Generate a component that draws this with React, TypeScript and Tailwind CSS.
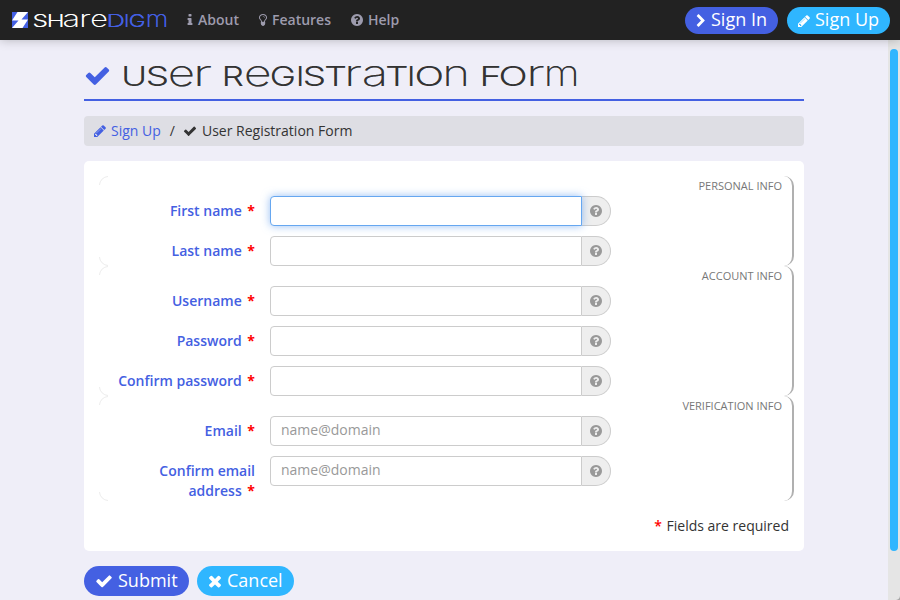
import React from "react";

const ICONS = {
  check:
    "M1671 566q0 40-28 68l-724 724-136 136q-28 28-68 28t-68-28l-136-136-362-362q-28-28-28-68t28-68l136-136q28-28 68-28t68 28l294 295 656-657q28-28 68-28t68 28l136 136q28 28 28 68z",
  times:
    "M1490 1322q0 40-28 68l-136 136q-28 28-68 28t-68-28l-294-294-294 294q-28 28-68 28t-68-28l-136-136q-28-28-28-68t28-68l294-294-294-294q-28-28-28-68t28-68l136-136q28-28 68-28t68 28l294 294 294-294q28-28 68-28t68 28l136 136q28 28 28 68t-28 68l-294 294 294 294q28 28 28 68z",
  question:
    "M1024 1376v-192q0-14-9-23t-23-9h-192q-14 0-23 9t-9 23v192q0 14 9 23t23 9h192q14 0 23-9t9-23zm256-672q0-88-55.5-163t-138.5-116-170-41q-243 0-371 213-15 24 8 42l132 100q7 6 19 6 16 0 25-12 53-68 86-92 34-24 86-24 48 0 85.5 26t37.5 59q0 38-20 61t-68 45q-63 28-115.5 86.5t-52.5 125.5v36q0 14 9 23t23 9h192q14 0 23-9t9-23q0-19 21.5-49.5t54.5-49.5q32-18 49-28.5t46-35 44.5-48 28-60.5 12.5-81zm384 192q0 209-103 385.5t-279.5 279.5-385.5 103-385.5-103-279.5-279.5-103-385.5 103-385.5 279.5-279.5 385.5-103 385.5 103 279.5 279.5 103 385.5z",
  pencil:
    "M491 1536l91-91-235-235-91 91v107h128v128h107zm523-928q0-22-22-22-10 0-17 7l-542 542q-7 7-7 17 0 22 22 22 10 0 17-7l542-542q7-7 7-17zm-54-192l416 416-832 832h-416v-416zm683 96q0 53-37 90l-166 166-416-416 166-165q36-38 90-38 53 0 91 38l235 234q37 39 37 91z",
  info: "M1216 1344v128q0 26-19 45t-45 19h-512q-26 0-45-19t-19-45v-128q0-26 19-45t45-19h64v-384h-64q-26 0-45-19t-19-45v-128q0-26 19-45t45-19h384q26 0 45 19t19 45v576h64q26 0 45 19t19 45zm-128-1152v192q0 26-19 45t-45 19h-256q-26 0-45-19t-19-45v-192q0-26 19-45t45-19h256q26 0 45 19t19 45z",
  bulb: "M1120 576q0 13-9.5 22.5t-22.5 9.5-22.5-9.5-9.5-22.5q0-46-54-71t-106-25q-13 0-22.5-9.5t-9.5-22.5 9.5-22.5 22.5-9.5q50 0 99.5 16t87 54 37.5 90zm160 0q0-72-34.5-134t-90-101.5-123-62-136.5-22.5-136.5 22.5-123 62-90 101.5-34.5 134q0 101 68 180 10 11 30.5 33t30.5 33q128 153 141 298h228q13-145 141-298 10-11 30.5-33t30.5-33q68-79 68-180zm128 0q0 155-103 268-45 49-74.5 87t-59.5 95.5-34 107.5q47 28 47 82 0 37-25 64 25 27 25 64 0 52-45 81 13 23 13 47 0 46-31.5 71t-77.5 25q-20 44-60 70t-87 26-87-26-60-70q-46 0-77.5-25t-31.5-71q0-24 13-47-45-29-45-81 0-37 25-64-25-27-25-64 0-54 47-82-4-50-34-107.5t-59.5-95.5-74.5-87q-103-113-103-268 0-99 44.5-184.5t117-142 164-89 186.5-32.5 186.5 32.5 164 89 117 142 44.5 184.5z",
  chevron:
    "M1363 877l-742 742q-19 19-45 19t-45-19l-166-166q-19-19-19-45t19-45l531-531-531-531q-19-19-19-45t19-45l166-166q19-19 45-19t45 19l742 742q19 19 19 45t-19 45z",
};

function Icon({ name, className }: { name: keyof typeof ICONS; className: string }) {
  return (
    <svg viewBox="0 0 1792 1792" fill="currentColor" className={"shrink-0 " + className} aria-hidden="true">
      <path d={ICONS[name]} />
    </svg>
  );
}

// Unicase lettering: small letters are drawn as tall as capitals, and every
// letter is widened to fill the ink span [left, right] given for it.
type Letter = [text: string, left: number, right: number];

const pen = document.createElement("canvas").getContext("2d")!;

function Unicase({
  letters,
  cap,
  weight,
  end,
}: {
  letters: Letter[];
  cap: number;
  weight: number;
  end: number;
}) {
  return (
    <span className="flex items-baseline whitespace-pre font-[Inter,sans-serif] leading-none">
      {letters.map(([text, left, right], i) => {
        const char = text.trim();
        const small = char === char.toLowerCase();
        const size = cap / (small ? 0.546 : 0.727);
        // The larger small letters need a lighter weight to keep one stroke width.
        const fontWeight = small ? weight - 100 : weight;
        pen.font = `${fontWeight} ${size * 10}px Inter`;
        const m = pen.measureText(char);
        const inkLeft = -m.actualBoundingBoxLeft / 10;
        const inkRight = m.actualBoundingBoxRight / 10;
        const scale = (right - left) / (inkRight - inkLeft);
        const next = i + 1 < letters.length ? letters[i + 1][1] : end;
        return (
          <span key={i} className="block" style={{ width: next - left }}>
            <span
              className="inline-block origin-left"
              style={{
                fontSize: size,
                fontWeight,
                transform: `translateX(${-inkLeft * scale}px) scaleX(${scale})`,
              }}
            >
              {char}
            </span>
            {text.slice(1)}
          </span>
        );
      })}
    </span>
  );
}

const TITLE: Letter[] = [
  ["U", 124, 144.3], ["S", 148, 167], ["e", 170, 193], ["r ", 197, 211.5],
  ["R", 225, 243], ["e", 245.5, 269], ["G", 271.5, 293.5], ["I", 298.7, 301.2], ["S", 305.5, 324.5],
  ["T", 326, 345.5], ["r", 348.5, 362], ["a", 364, 384], ["T", 387, 407], ["I", 410.3, 412.8],
  ["O", 417, 442], ["n ", 446.5, 466.5],
  ["F", 483, 499.5], ["O", 500.7, 525.3], ["r", 530, 544], ["m", 547, 576],
];

const BRAND: Letter[] = [
  ["S", 34, 46.5], ["H", 48.7, 62], ["a", 64.3, 77.5], ["r", 82, 90], ["e", 92, 106.3],
];

const BRAND_TAIL: Letter[] = [
  ["D", 109, 123.5], ["I", 126.2, 127.6], ["G", 130.3, 144.3], ["m", 148, 166],
];

function Field({
  label,
  placeholder,
  focused,
}: {
  label: string;
  placeholder?: string;
  focused?: boolean;
}) {
  return (
    <div className="flex items-start">
      <label className="w-[156px] pt-[5px] pl-3 text-right font-semibold text-[#4460e2]">
        {label} <span className="ml-0.5 font-bold text-[#f00]">*</span>
      </label>
      <div className="ml-[15px] flex h-[30px]">
        <input
          placeholder={placeholder}
          className={
            "relative h-[30px] w-[312px] rounded-l border bg-white px-[10px] pb-[3px] text-[14px] text-[#333] outline-none placeholder:text-[#999] " +
            (focused
              ? "z-10 border-[#66a7f0] shadow-[0_0_9px_rgba(82,148,236,0.6)]"
              : "border-[#ccc]")
          }
        />
        <span className="flex w-[29px] items-center justify-center rounded-r-full border border-l-0 border-[#ccc] bg-[#eee] text-[#999]">
          <Icon name="question" className="size-[14px]" />
        </span>
      </div>
    </div>
  );
}

function Group({ legend, children }: { legend: string; children: React.ReactNode }) {
  return (
    <section className="relative flex w-[695px] flex-col gap-2.5 rounded-[10px] border-r-2 border-[#b0b0b0] pt-5">
      {children}
      <h2 className="absolute top-0 right-[10px] text-[11px] leading-5 text-[#777] uppercase">{legend}</h2>
      <svg className="absolute top-0 left-0 size-[10px]" viewBox="0 0 10 10" fill="none" stroke="#ececec">
        <path d="M.5 9A9 9 0 0 1 9 .5" />
      </svg>
      <svg className="absolute bottom-0 left-0 size-[10px]" viewBox="0 0 10 10" fill="none" stroke="#ececec">
        <path d="M.5 1A9 9 0 0 0 9 9.5" />
      </svg>
    </section>
  );
}

export default function App() {
  return (
    <div className="relative flex h-[600px] w-[900px] flex-col overflow-hidden bg-[#efeef8] font-['Open_Sans',sans-serif] text-[14px] leading-5 text-[#333]">
      <header className="z-10 flex h-10 shrink-0 items-center bg-[#222] pr-[10px] pl-3 text-[#9d9bad] shadow-[0_0_10px_rgba(0,0,0,0.25)]">
        <svg className="size-4" viewBox="0 0 16 16" aria-hidden="true">
          <path d="M0 0h16v16H0z" fill="#4460e2" />
          <path d="M5.500 0H16L9.500 7.500H16L10.500 16H0L6.500 8.500H0z" fill="#fff" />
        </svg>
        <div className="ml-[6px] flex w-[153px] pb-px">
          <span className="text-white [text-shadow:0_0.3px_0_#ffffff99]">
            <Unicase letters={BRAND} cap={12.5} weight={350} end={109} />
          </span>
          <span className="text-[#4460e2] [text-shadow:0_0.3px_0_#4460e2]">
            <Unicase letters={BRAND_TAIL} cap={12.5} weight={300} end={170} />
          </span>
        </div>
        <nav className="flex items-center font-semibold">
          <a className="flex w-[72px] items-center">
            <Icon name="info" className="-ml-1 size-[14px]" />
            <span className="ml-px">About</span>
          </a>
          <a className="flex w-[91px] items-center">
            <Icon name="bulb" className="-ml-[3px] size-[14px]" />
            <span className="ml-[2px]">Features</span>
          </a>
          <a className="flex items-center gap-1">
            <Icon name="question" className="size-[14px]" />
            <span>Help</span>
          </a>
        </nav>
        <div className="ml-auto flex gap-[9px] text-[18px] text-white">
          <button className="flex h-[27px] w-[93px] items-center rounded-full bg-[#4460e2] pl-[9px]">
            <Icon name="chevron" className="mt-px size-[14px]" />
            <span className="ml-[3px] pb-0.5">Sign In</span>
          </button>
          <button className="flex h-[27px] w-[103px] items-center rounded-full bg-[#2fb6ff] pl-[10px]">
            <Icon name="pencil" className="mt-px size-[14px]" />
            <span className="ml-[4px] pb-0.5">Sign Up</span>
          </button>
        </div>
      </header>

      <div className="flex min-h-0 flex-1">
        <main className="w-[888px] pl-[84px]">
          <div className="flex h-[61px] w-[720px] items-center border-b-2 border-[#4460e2] pt-3">
            <Icon name="check" className="size-[27px] text-[#4460e2]" />
            <h1 className="ml-[13px] pb-[5px] text-[#333] [text-shadow:0_0.4px_0_#33333366]">
              <Unicase letters={TITLE} cap={19.8} weight={300} end={580} />
            </h1>
          </div>

          <div className="mt-[15px] flex h-[30px] w-[720px] items-center rounded bg-[#dedee4] pl-[9px]">
            <Icon name="pencil" className="size-[14px] text-[#4460e2]" />
            <a className="ml-1 text-[#4460e2]">Sign Up</a>
            <span className="ml-[9px]">/</span>
            <Icon name="check" className="ml-[8px] size-[14px]" />
            <span className="ml-[5px]">User Registration Form</span>
          </div>

          <form className="mt-[15px] h-[390px] w-[720px] rounded-[5px] bg-white px-[15px] pt-[15px]">
            <Group legend="Personal info">
              <Field label="First name" focused />
              <Field label="Last name" />
            </Group>
            <Group legend="Account info">
              <Field label="Username" />
              <Field label="Password" />
              <Field label="Confirm password" />
            </Group>
            <Group legend="Verification info">
              <Field label="Email" placeholder="name@domain" />
              <Field label="Confirm email address" placeholder="name@domain" />
            </Group>
            <p className="mt-[15px] text-right">
              <span className="mr-px font-semibold text-[#f00]">*</span> Fields are required
            </p>
          </form>

          <div className="mt-[15px] flex gap-2 text-[18px] text-white">
            <button className="flex h-[30px] w-[105px] items-center rounded-full bg-[#4460e2] pl-[11px]">
              <Icon name="check" className="size-[18px]" />
              <span className="ml-[5px] pb-0.5">Submit</span>
            </button>
            <button className="flex h-[30px] w-[97px] items-center rounded-full bg-[#2fb6ff] pl-[9px]">
              <Icon name="times" className="size-[18px]" />
              <span className="ml-[3px] pb-0.5">Cancel</span>
            </button>
          </div>
        </main>
        <div className="w-3 bg-[#e5e5e5] px-0.5 pt-[9px]">
          <div className="h-[502px] rounded-full bg-[#2fb6ff]" />
        </div>
      </div>

      <svg className="absolute right-0 bottom-0 size-1" viewBox="0 0 4 4" aria-hidden="true">
        <path d="M4 0Q3.500 3.500 0 4H4z" fill="#a8a8a8" />
      </svg>
    </div>
  );
}
